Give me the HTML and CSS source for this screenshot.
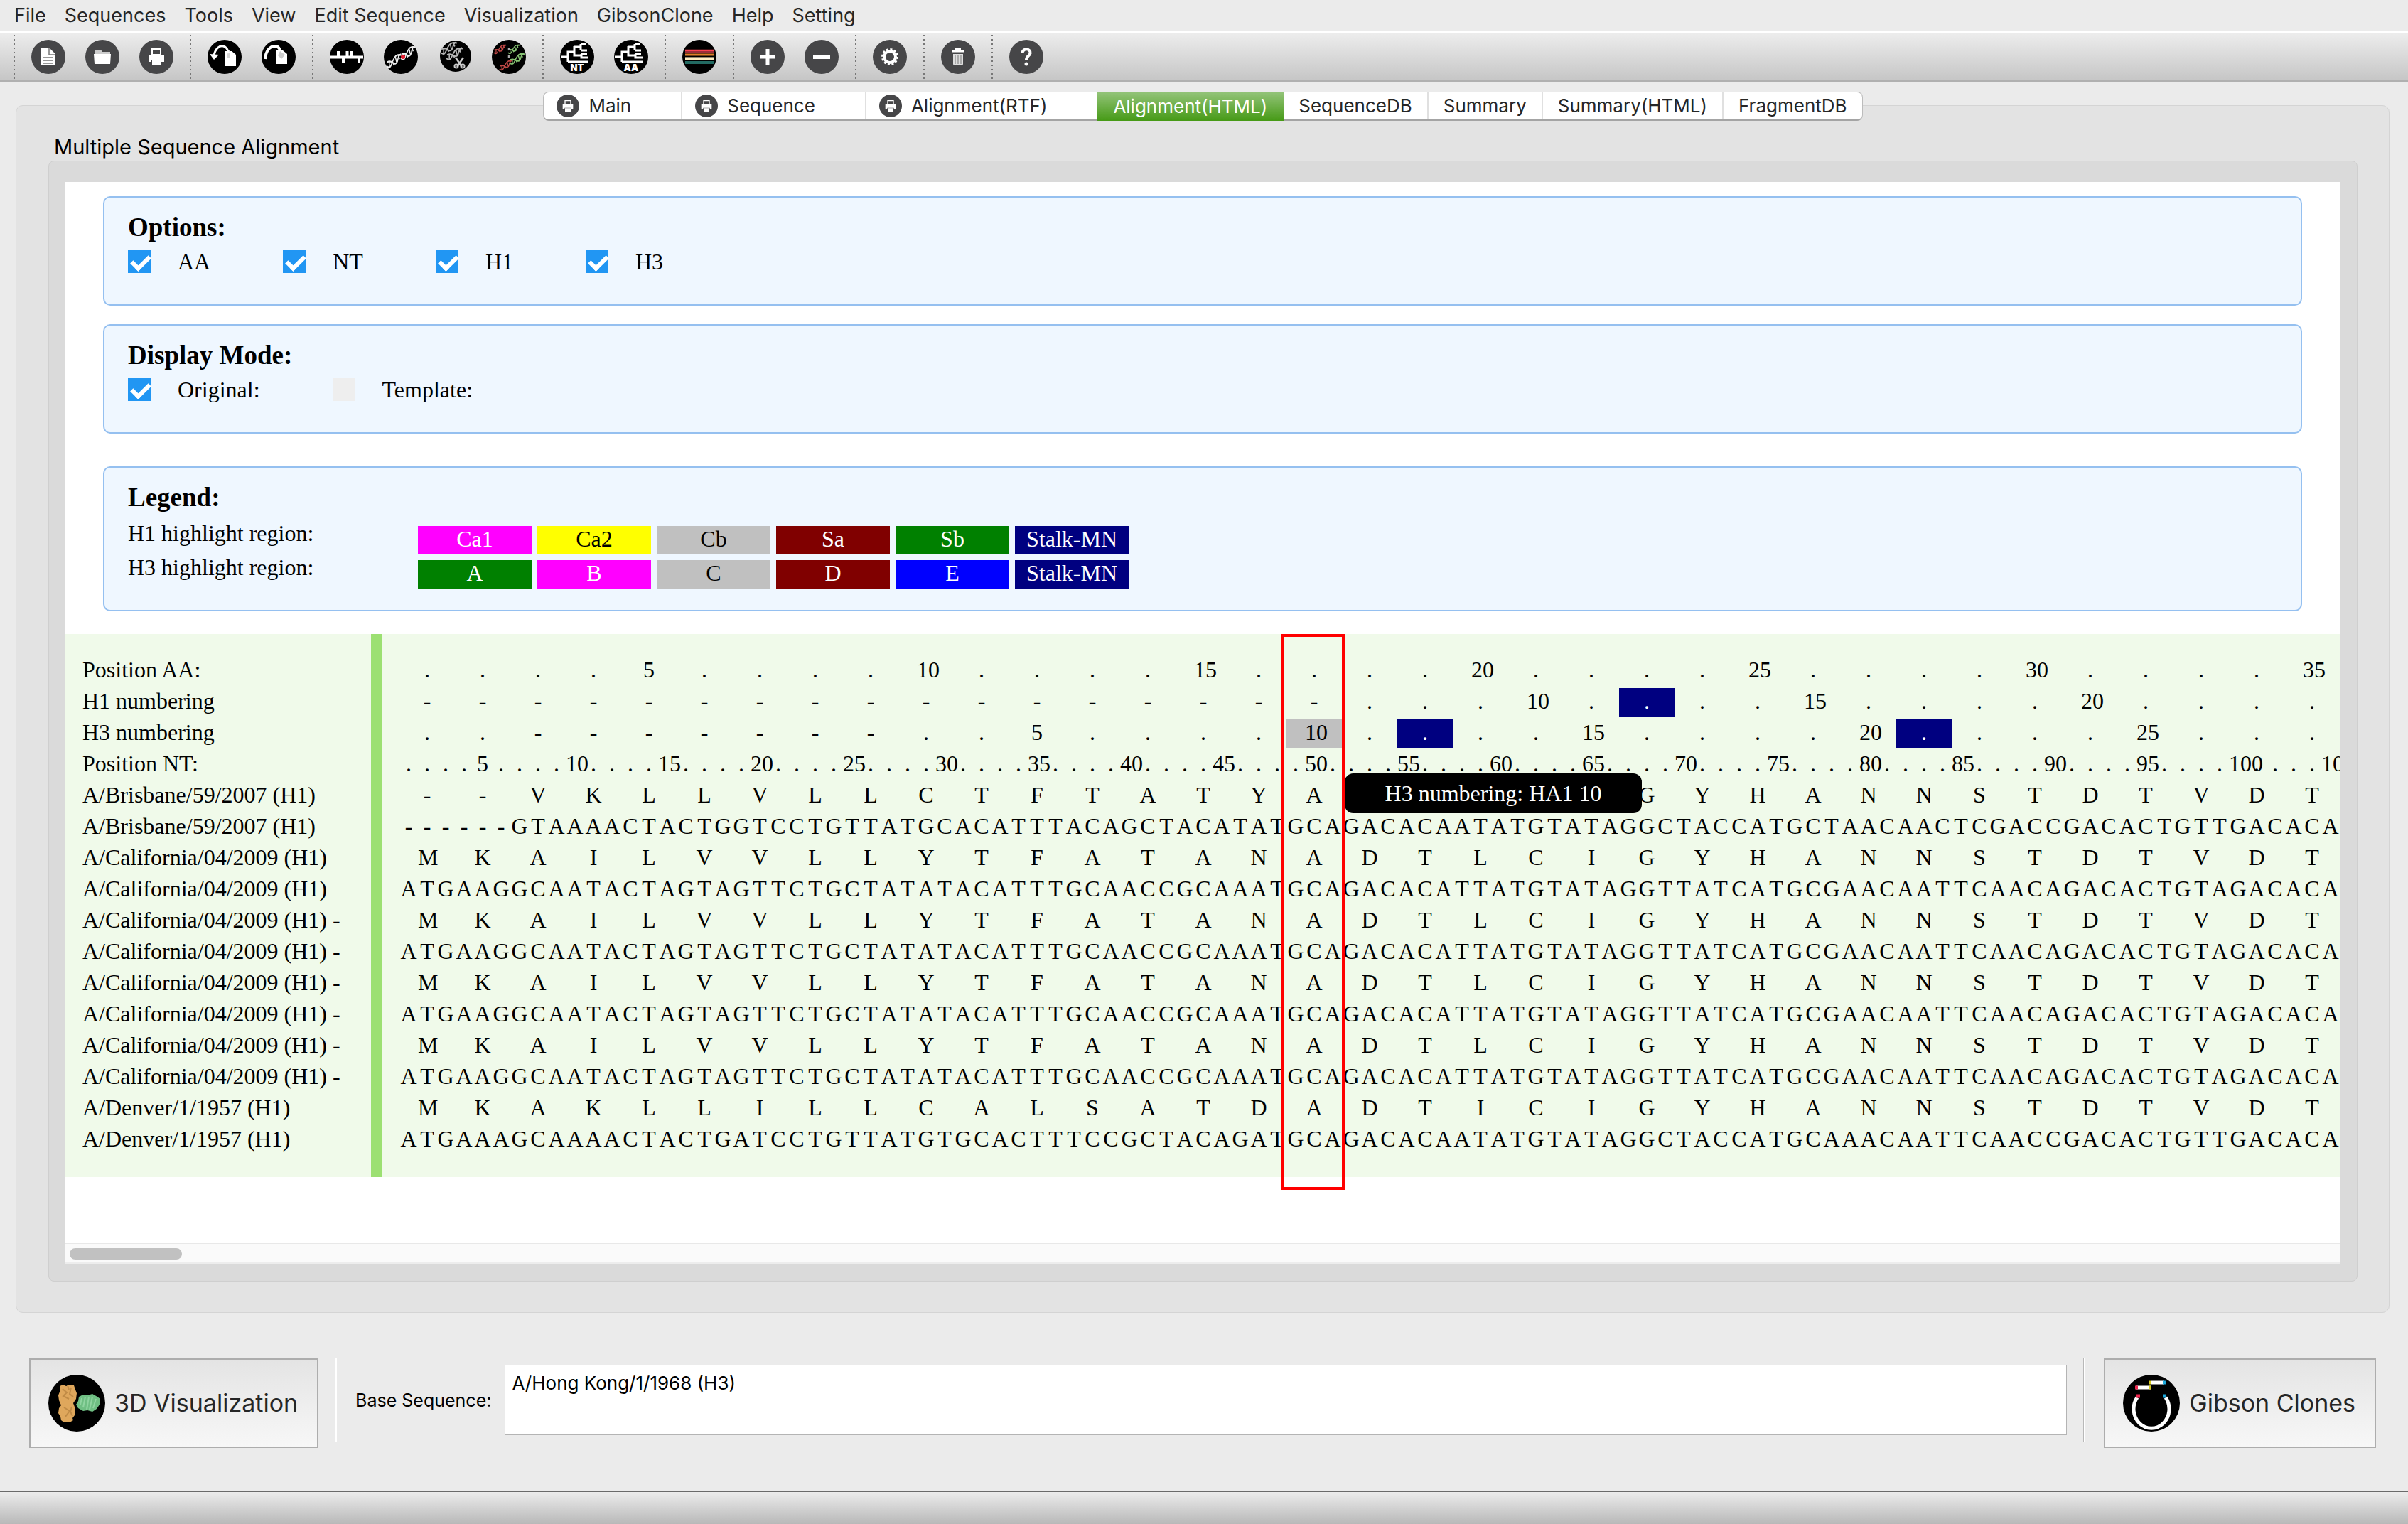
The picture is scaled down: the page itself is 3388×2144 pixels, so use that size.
FILE: index.html
```html
<!DOCTYPE html>
<html lang="en">
<head>
<meta charset="utf-8">
<title>Multiple Sequence Alignment</title>
<link rel="stylesheet" href="styles.css">
</head>
<body>
<nav class="menubar">
  <button type="button">File</button>
  <button type="button">Sequences</button>
  <button type="button">Tools</button>
  <button type="button">View</button>
  <button type="button">Edit Sequence</button>
  <button type="button">Visualization</button>
  <button type="button">GibsonClone</button>
  <button type="button">Help</button>
  <button type="button">Setting</button>
</nav>

<svg class="sprite" aria-hidden="true">
  <symbol id="printer" viewBox="0 0 48 48">
    <circle cx="24" cy="24" r="24" fill="#464648"/>
    <path d="M18 13h12v8H18z" fill="#464648" stroke="#fff" stroke-width="2"/>
    <path d="M13 21h22v10h-4v-3H17v3h-4zM18 29h12v7H18z" fill="#fff"/>
  </symbol>
  <symbol id="dna" viewBox="0 0 24 16" preserveAspectRatio="none">
    <path d="M1 13c6 4 7-2 9-5s4-8 13-6M2 9c5-2 7 0 9 1s5 1 6-2 1-6 5-7M5 9v5M9 8l3 4M14 4l2 6M18 2l2 4" fill="none" stroke="currentColor" stroke-width="1.6"/>
  </symbol>
</svg>

<div class="toolbar" role="toolbar" aria-label="Main toolbar">
  <span class="sep"></span>
  <button type="button" aria-label="New"><svg viewBox="0 0 48 48"><circle cx="24" cy="24" r="24" fill="#464648"/><path d="M14 12h12l8 8v16H14z" fill="#fff"/><path d="M25 12v9h9M17 25h14M17 29h14M17 33h14" fill="none" stroke="#777" stroke-width="1.5"/></svg></button>
  <button type="button" aria-label="Open"><svg viewBox="0 0 48 48"><circle cx="24" cy="24" r="24" fill="#464648"/><path d="M14 14h8l2 3h11v4H14z" fill="#ccc"/><path d="M12 20h24l-1 14H13z" fill="#fff"/></svg></button>
  <button type="button" aria-label="Print"><svg><use href="#printer"/></svg></button>
  <span class="sep"></span>
  <button type="button" aria-label="Import"><svg viewBox="0 0 48 48"><circle cx="24" cy="24" r="24"/><path d="M24 16h10l6 5v16H24z" fill="#fff"/><path d="M27 15h5v11h-5z" fill="#d4d4d4"/><path d="M9 22C11 12 17 8 22 9s6 5 8 10" fill="none" stroke="#fff" stroke-width="3"/><path d="M3 20l13 1-7 7z" fill="#fff"/></svg></button>
  <button type="button" aria-label="Export"><svg viewBox="0 0 48 48"><circle cx="24" cy="24" r="24"/><path d="M20 15h10l6 5v14H20z" fill="#fff"/><path d="M5 27C6 15 12 9 19 9c6 0 7 5 8 11" fill="none" stroke="#fff" stroke-width="4"/><path d="M26 16l7 5-5 6-5-5z" fill="#ccc"/></svg></button>
  <span class="sep"></span>
  <button type="button" aria-label="Sequence sites"><svg viewBox="0 0 48 48"><circle cx="24" cy="24" r="24"/><path d="M1 24.500h46M12 16v8M24.500 16v8M30.500 16v8M19 24v9M41 24v9" fill="none" stroke="#fff" stroke-width="4"/></svg></button>
  <button type="button" class="white" aria-label="Mutate"><svg viewBox="0 0 48 48"><circle cx="24" cy="24" r="24"/><use href="#dna" x="3" y="19" width="23" height="22"/><use href="#dna" x="23" y="8" width="22" height="22"/><circle cx="27" cy="24" r="3" fill="#e81c2e"/></svg></button>
  <button type="button" class="grey" aria-label="Cut sequence"><svg viewBox="0 0 48 48"><circle cx="25" cy="23" r="22"/><use href="#dna" x="3" y="2" width="25" height="20"/><use href="#dna" x="11" y="10" width="25" height="20"/><path d="M25 25l9 13M36 25l-9 13" stroke="#ccc" stroke-width="2.500"/><circle cx="26" cy="37" r="2.500" fill="none" stroke="#ccc" stroke-width="2"/><circle cx="35" cy="37" r="2.500" fill="none" stroke="#ccc" stroke-width="2"/></svg></button>
  <button type="button" aria-label="Reassort"><svg viewBox="0 0 48 48"><circle cx="24" cy="24" r="24"/><g color="#c04846"><use href="#dna" x="2" y="6" width="19" height="15"/><use href="#dna" x="10" y="28" width="20" height="16"/></g><g color="#85c272"><use href="#dna" x="22" y="6" width="18" height="15"/><use href="#dna" x="24" y="18" width="23" height="18"/></g><path d="M24 11v18" stroke="#aaa" stroke-width="2.500" stroke-dasharray="4 7"/></svg></button>
  <span class="sep"></span>
  <button type="button" aria-label="Nucleotide tree"><svg viewBox="0 0 48 48"><circle cx="24" cy="24" r="24"/><path d="M1 24h10M11 31V17h9M20 9v13h9M20 10h9M29 6v9M29 6h8M29 15h9M30 20v5h10M29 20h9M11 31h29" fill="none" stroke="#fff" stroke-width="3"/><text x="24" y="44" text-anchor="middle" class="icon-text">NT</text></svg></button>
  <button type="button" aria-label="Amino acid tree"><svg viewBox="0 0 48 48"><circle cx="24" cy="24" r="24"/><path d="M1 24h10M11 31V17h9M20 9v13h9M20 10h9M29 6v9M29 6h8M29 15h9M30 20v5h10M29 20h9M11 31h29" fill="none" stroke="#fff" stroke-width="3"/><text x="24" y="44" text-anchor="middle" class="icon-text">AA</text></svg></button>
  <span class="sep"></span>
  <button type="button" aria-label="Highlight regions"><svg viewBox="0 0 48 48"><circle cx="24" cy="24" r="24"/><path d="M4 15h40" stroke="#f94250" stroke-width="2.500"/><path d="M4 17h40" stroke="#9e2d3a" stroke-width="2"/><path d="M4 21h40" stroke="#e07f28" stroke-width="3"/><path d="M4 25h40" stroke="#93876d" stroke-width="2"/><path d="M4 27h40" stroke="#fdecc0" stroke-width="2"/><path d="M4 32h40" stroke="#226a62" stroke-width="4"/></svg></button>
  <span class="sep"></span>
  <button type="button" aria-label="Zoom in"><svg viewBox="0 0 48 48"><circle cx="24" cy="24" r="24" fill="#464648"/><path d="M24 13v22M13 24h22" stroke="#fff" stroke-width="5"/></svg></button>
  <button type="button" aria-label="Zoom out"><svg viewBox="0 0 48 48"><circle cx="24" cy="24" r="24" fill="#464648"/><path d="M12 24h24" stroke="#fff" stroke-width="6"/></svg></button>
  <span class="sep"></span>
  <button type="button" aria-label="Settings"><svg viewBox="0 0 48 48"><circle cx="24" cy="24" r="24" fill="#464648"/><circle cx="24" cy="24" r="8" fill="none" stroke="#fff" stroke-width="4"/><circle cx="24" cy="24" r="10.500" fill="none" stroke="#fff" stroke-width="3" stroke-dasharray="3 2.500"/></svg></button>
  <span class="sep"></span>
  <button type="button" aria-label="Delete"><svg viewBox="0 0 48 48"><circle cx="24" cy="24" r="24" fill="#464648"/><path d="M17 20h14v14q0 2-2 2H19q-2 0-2-2z" fill="#ddd"/><path d="M20 22v12M24 22v12M28 22v12" stroke="#aaa" stroke-width="2"/><path d="M16 16h16M20 13h8" stroke="#fff" stroke-width="3"/></svg></button>
  <span class="sep"></span>
  <button type="button" aria-label="Help"><svg viewBox="0 0 48 48"><circle cx="24" cy="24" r="24" fill="#464648"/><path d="M18.500 19c0-8 12-7 11 0-1 4-5.500 4-5.500 9" fill="none" stroke="#fff" stroke-width="4"/><circle cx="24" cy="34" r="2.500" fill="#fff"/></svg></button>
</div>

<main class="panel">
  <div class="tabs" role="tablist">
    <button type="button" role="tab" class="closable"><svg><use href="#printer"/></svg>Main</button>
    <button type="button" role="tab" class="closable"><svg><use href="#printer"/></svg>Sequence</button>
    <button type="button" role="tab" class="closable"><svg><use href="#printer"/></svg>Alignment(RTF)</button>
    <button type="button" role="tab" class="active" aria-selected="true">Alignment(HTML)</button>
    <button type="button" role="tab">SequenceDB</button>
    <button type="button" role="tab">Summary</button>
    <button type="button" role="tab">Summary(HTML)</button>
    <button type="button" role="tab">FragmentDB</button>
  </div>
  <h1 class="panel-title">Multiple Sequence Alignment</h1>
  <div class="group">
    <div class="viewer">
      <section class="box">
        <h2>Options:</h2>
        <div class="checks">
          <label><input type="checkbox" checked>AA</label>
          <label><input type="checkbox" checked>NT</label>
          <label><input type="checkbox" checked>H1</label>
          <label><input type="checkbox" checked>H3</label>
        </div>
      </section>
      <section class="box">
        <h2>Display Mode:</h2>
        <div class="checks">
          <label><input type="checkbox" checked>Original:</label>
          <label><input type="checkbox">Template:</label>
        </div>
      </section>
      <section class="box legend">
        <h2>Legend:</h2>
        <div class="legend-row">
          <span class="legend-name">H1 highlight region:</span>
          <span class="swatch magenta">Ca1</span>
          <span class="swatch yellow">Ca2</span>
          <span class="swatch silver">Cb</span>
          <span class="swatch maroon">Sa</span>
          <span class="swatch green">Sb</span>
          <span class="swatch navy">Stalk-MN</span>
        </div>
        <div class="legend-row">
          <span class="legend-name">H3 highlight region:</span>
          <span class="swatch green">A</span>
          <span class="swatch magenta">B</span>
          <span class="swatch silver">C</span>
          <span class="swatch maroon">D</span>
          <span class="swatch blue">E</span>
          <span class="swatch navy">Stalk-MN</span>
        </div>
      </section>
      <div class="alignment">
        <div class="alignment-scroll">
          <table id="alignment"></table>
        </div>
        <div class="column-frame"></div>
      </div>
      <div class="scrollbar"><div class="thumb"></div></div>
    </div>
  </div>
</main>

<div class="bottom">
  <button type="button" class="big">
    <svg viewBox="0 0 80 80"><circle cx="40" cy="40" r="40"/><path d="M16 16l5-2 4 2 5-2 6 1 2 6 2 5-1 8-4 6 3 8-1 9-3 4 1 3-5 3-5-1-3 1-4-3-1-5-3-5 1-7 3-4-3-7-1-7 2-5z" fill="#dfa75c"/><path d="M20 20l6 5-5 5 8 4M32 18l-2 9 5 4M22 46l8 5-6 8M33 45l-2 7 3 6M27 15l2 6" fill="none" stroke="#c08b46" stroke-width="2"/><path d="M43 31l6-3 6 1 7-2 7 4 4 3-1 8-4 6-6 4-7-2-6 1-7-4-3-5 3-5z" fill="#6fbf83"/><path d="M47 33l-2 9M52 31l-3 15M57 31l-3 18M62 31l-4 18M67 34l-4 13" stroke="#8fd4a0" stroke-width="2"/></svg>
    3D Visualization
  </button>
  <span class="rule"></span>
  <label for="base">Base Sequence:</label>
  <textarea id="base">A/Hong Kong/1/1968 (H3)</textarea>
  <span class="rule"></span>
  <button type="button" class="big">
    <svg viewBox="0 0 80 80"><circle cx="40" cy="40" r="40"/><path d="M20 32a25 27 0 1 0 40 0" fill="none" stroke="#fff" stroke-width="5"/><path d="M19 18h20M39 11h18" stroke="#fff" stroke-width="5"/><path d="M17 18h4M19 30h5" stroke="#f0264f" stroke-width="5"/><path d="M36 18h4M37 11h3" stroke="#d9cc1f" stroke-width="5"/><path d="M56 11h4M56 30h5" stroke="#1ba8dc" stroke-width="5"/></svg>
    Gibson Clones
  </button>
</div>
<footer class="statusbar"></footer>
<script src="app.js"></script>
</body>
</html>
```
FILE: styles.css
```css
* { box-sizing: border-box; }

body {
  margin: 0;
  min-height: 100vh;
  display: flex;
  flex-direction: column;
  background: #ebebeb;
  color: #000;
  font-family: Inter, "Liberation Sans", sans-serif;
  font-size: 26px;
  line-height: 32px;
}

button {
  margin: 0;
  padding: 0;
  border: 0;
  background: none;
  color: #262626;
  font: inherit;
}

.sprite { display: none; }

/* Menu and toolbar */
.menubar {
  display: flex;
  gap: 26px;
  height: 44px;
  padding: 6px 20px;
  font-size: 27px;
}

.toolbar {
  display: flex;
  align-items: center;
  height: 72px;
  padding: 0 10px;
  border-top: 2px solid #fff;
  border-bottom: 3px solid #b0b0b0;
  background: linear-gradient(#ededed, #c6c6c6);
}
.toolbar button {
  width: 76px;
  height: 48px;
  padding: 0 14px;
}
.toolbar svg { display: block; width: 48px; height: 48px; }
.sep {
  width: 2px;
  height: 62px;
  margin: 0 9px;
  background: repeating-linear-gradient(#777 0 2px, transparent 2px 6px);
}
.white { color: #eee; }
.grey { color: #b5b5b5; }
.icon-text {
  fill: #fff;
  font: 900 13px Inter, sans-serif;
}

/* Panel and tabs */
.panel {
  margin: 32px 26px 0 22px;
  padding: 0 44px 43px 45px;
  border: 1px solid #d4d4d4;
  border-radius: 10px;
  background: #e3e3e3;
}
.tabs {
  display: flex;
  width: max-content;
  height: 41px;
  margin: -20px auto 0;
  border: 1px solid #bcbcbc;
  border-bottom: 2px solid #a4a4a4;
  border-radius: 8px;
  background: #fff;
}
.tabs button {
  display: flex;
  align-items: center;
  padding: 0 21px;
  border-left: 2px solid #e0e0e0;
}
.tabs button:first-child { border-left: 0; }
.tabs .closable { gap: 13px; padding: 0 70px 0 18px; }
.tabs svg { width: 32px; height: 32px; }
.tabs .active {
  margin: -1px 0 -2px;
  padding: 0 23px;
  border: 0;
  background: linear-gradient(#94c47a, #469a16);
  color: #fff;
}
.tabs .active + button { border-left: 0; }
.panel-title {
  margin: 22px 0 4px 8px;
  font-size: 29px;
  font-weight: 400;
  line-height: 30px;
}
.group {
  padding: 29px 24px 24px 23px;
  border: 1px solid #cfcfcf;
  border-radius: 8px;
  background: #dadada;
}

/* Alignment document */
.viewer {
  padding-top: 20px;
  background: #fff;
  font-family: "Liberation Serif", serif;
  font-size: 32px;
  line-height: 36px;
}
.box {
  margin: 0 53px 26px;
  padding: 22px 33px 42px;
  border: 2px solid #95c0f0;
  border-radius: 10px;
  background: #eff7ff;
}
.box h2 {
  margin: 0;
  font-size: 37px;
  line-height: 40px;
}
.checks {
  display: flex;
  gap: 102px;
  margin-top: 10px;
}
.checks label { display: flex; align-items: center; gap: 38px; }
.checks input {
  appearance: none;
  position: relative;
  width: 32px;
  height: 32px;
  margin: 0;
  background: #eee;
}
.checks input:checked { background: #2196f3; }
.checks input:checked::after {
  content: "";
  position: absolute;
  left: 10px;
  top: 2px;
  width: 10px;
  height: 20px;
  border: solid #fff;
  border-width: 0 6px 6px 0;
  transform: rotate(45deg);
}
.legend {
  margin-top: 46px;
  margin-bottom: 32px;
  padding-bottom: 30px;
}
.legend h2 { margin-bottom: 12px; }
.legend-row { display: flex; gap: 8px; height: 48px; }
.legend-name { width: 400px; }
.swatch {
  width: 160px;
  height: 40px;
  margin-top: 8px;
  text-align: center;
}
.magenta { background: #f0f; color: #fff; }
.yellow { background: #ff0; }
.silver { background: #c0c0c0; }
.maroon { background: #800000; color: #fff; }
.green { background: #008000; color: #fff; }
.blue { background: #00f; color: #fff; }
.navy { background: #000080; color: #fff; }

.alignment { position: relative; }
.alignment-scroll {
  overflow: hidden;
  padding: 28px 0;
  background: linear-gradient(90deg, #f0faea 430px, #9ce072 430px 446px, #f0faea 446px);
}
.alignment table {
  width: 3200px;
  table-layout: fixed;
  border-collapse: separate;
  border-spacing: 0 4px;
}
.name-col { width: 470px; }
.alignment th {
  height: 40px;
  padding: 0 0 0 24px;
  font-weight: 400;
  text-align: left;
  vertical-align: top;
  white-space: nowrap;
}
.alignment td {
  height: 40px;
  padding: 0;
  text-align: center;
  vertical-align: top;
  white-space: nowrap;
}
.alignment .codon { padding: 0 26px; }
.alignment .has-tip { position: relative; }
.tip {
  position: absolute;
  z-index: 2;
  left: 82px;
  top: 76px;
  width: 418px;
  padding: 10px 0;
  border-radius: 12px;
  background: #000;
  color: #fff;
}
.column-frame {
  position: absolute;
  left: 1710px;
  top: 0;
  width: 90px;
  bottom: -18px;
  border: 4px solid #f00;
}
.scrollbar {
  height: 30px;
  margin-top: 92px;
  padding: 6px;
  border-top: 2px solid #e8e8e8;
  border-bottom: 2px solid #ededed;
  background: #fafafa;
}
.thumb {
  width: 158px;
  height: 16px;
  border-radius: 8px;
  background: #c1c1c1;
}

/* Bottom controls */
.bottom {
  display: flex;
  align-items: flex-start;
  margin-top: 63px;
  padding: 0 45px 60px 41px;
}
.big {
  display: flex;
  align-items: center;
  gap: 13px;
  height: 126px;
  margin-top: 1px;
  padding: 0 27px 0 25px;
  border: 2px solid #adadad;
  background: linear-gradient(#e4e4e4, #f7f7f7);
  font-size: 34px;
}
.big svg { width: 80px; height: 80px; }
.rule {
  width: 3px;
  height: 119px;
  margin: 0 26px 0 23px;
  border-left: 1px solid #b8b8b8;
  background: #fff;
}
.bottom label {
  margin: 44px 19px 0 0;
  font-size: 25px;
}
.bottom textarea {
  flex: 1;
  height: 99px;
  margin-top: 10px;
  padding: 9px;
  border: 1px solid #b4b4b4;
  border-top: 1px solid #888;
  border-radius: 0;
  background: #fff;
  font: inherit;
  resize: none;
}
.statusbar {
  height: 46px;
  margin-top: auto;
  border-top: 1px solid #6a6a6a;
  background: linear-gradient(#ececec, #b8b8b8);
}
```
FILE: app.js
```js
const COLUMNS = 35;

// Numbering tracks: "-" before the region starts, a number every fifth residue.
function numbering(lead, firstColumn, firstValue, count) {
  const cells = [...lead];
  for (let column = lead.length + 1; column <= count; column++) {
    const value = firstValue + column - firstColumn;
    cells.push(value % 5 === 0 ? String(value) : ".");
  }
  return cells;
}

const california = {
  aa: "MKAILVVLLYTFATANADTLCIGYHANNSTDTVDT",
  nt: "ATGAAGGCAATACTAGTAGTTCTGCTATATACATTTGCAACCGCAAATGCAGACACATTATGTATAGGTTATCATGCGAACAATTCAACAGACACTGTAGACACA"
};
const sequences = [
  {
    name: "A/Brisbane/59/2007 (H1)",
    aa: "--VKLLVLLCTFTATYADTICIGYHANNSTDTVDT",
    nt: "------GTAAAACTACTGGTCCTGTTATGCACATTTACAGCTACATATGCAGACACAATATGTATAGGCTACCATGCTAACAACTCGACCGACACTGTTGACACA"
  },
  { name: "A/California/04/2009 (H1)", ...california },
  { name: "A/California/04/2009 (H1) -", ...california },
  { name: "A/California/04/2009 (H1) -", ...california },
  { name: "A/California/04/2009 (H1) -", ...california },
  {
    name: "A/Denver/1/1957 (H1)",
    aa: "MKAKLLILLCALSATDADTICIGYHANNSTDTVDT",
    nt: "ATGAAAGCAAAACTACTGATCCTGTTATGTGCACTTTCCGCTACAGATGCAGACACAATATGTATAGGCTACCATGCAAACAATTCAACCGACACTGTTGACACA"
  }
];

const table = document.getElementById("alignment");
const columns = document.createElement("colgroup");
columns.innerHTML = '<col class="name-col">' + "<col>".repeat(COLUMNS * 3);
table.append(columns);

function addRow(name, cells, span, marks = {}) {
  const row = table.insertRow();
  const head = document.createElement("th");
  head.scope = "row";
  head.textContent = name;
  row.append(head);
  cells.forEach((text, index) => {
    const cell = row.insertCell();
    cell.textContent = text;
    if (span > 1) {
      cell.colSpan = span;
      cell.classList.add("codon");
    }
    if (marks[index + 1]) cell.classList.add(marks[index + 1]);
  });
  return row;
}

addRow("Position AA:", numbering("", 1, 1, COLUMNS), 3);
addRow("H1 numbering", numbering("-".repeat(17), 21, 10, COLUMNS), 3, { 23: "navy" });
const h3 = addRow("H3 numbering", numbering("..-------", 12, 5, COLUMNS), 3,
  { 17: "silver", 19: "navy", 28: "navy" });
addRow("Position NT:", numbering("", 1, 1, COLUMNS * 3), 1);
for (const sequence of sequences) {
  addRow(sequence.name, [...sequence.aa], 3);
  addRow(sequence.name, [...sequence.nt], 1);
}

const tip = document.createElement("div");
tip.className = "tip";
tip.setAttribute("role", "tooltip");
tip.textContent = "H3 numbering: HA1 10";
h3.cells[17].classList.add("has-tip");
h3.cells[17].append(tip);
```
